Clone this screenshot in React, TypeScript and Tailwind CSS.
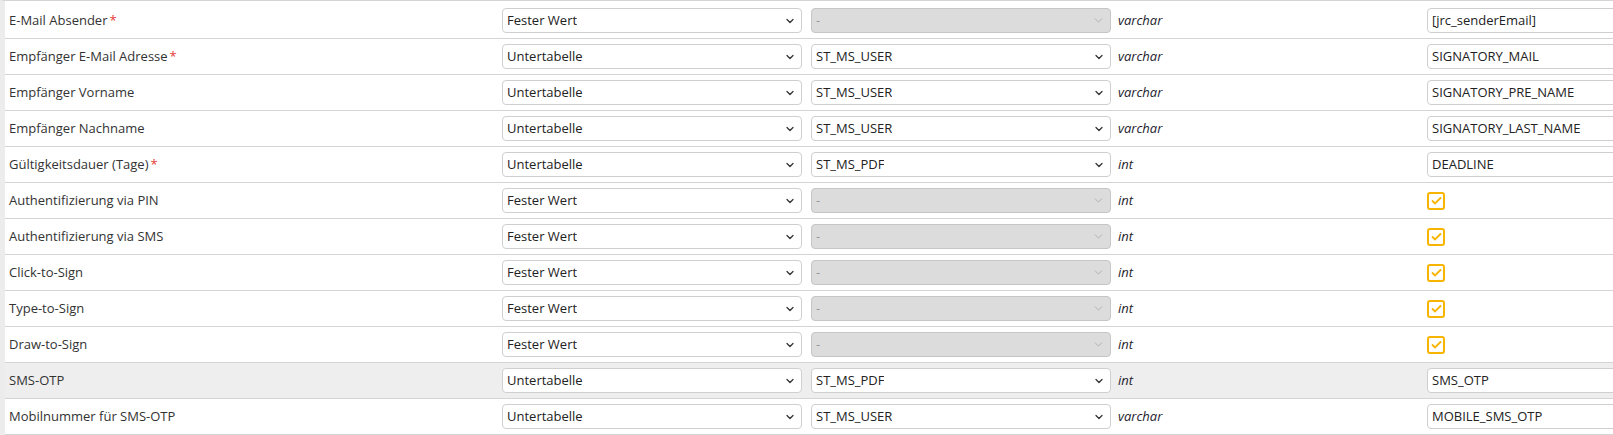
import React from 'react';
import { ChevronDown } from 'lucide-react';

type Row = {
  label: string;
  required?: boolean;
  source: string;
  table: string | null;
  type: string;
  value: string | null;
  highlight?: boolean;
};

const rows: Row[] = [
  { label: 'E-Mail Absender', required: true, source: 'Fester Wert', table: null, type: 'varchar', value: '[jrc_senderEmail]' },
  { label: 'Empfänger E-Mail Adresse', required: true, source: 'Untertabelle', table: 'ST_MS_USER', type: 'varchar', value: 'SIGNATORY_MAIL' },
  { label: 'Empfänger Vorname', source: 'Untertabelle', table: 'ST_MS_USER', type: 'varchar', value: 'SIGNATORY_PRE_NAME' },
  { label: 'Empfänger Nachname', source: 'Untertabelle', table: 'ST_MS_USER', type: 'varchar', value: 'SIGNATORY_LAST_NAME' },
  { label: 'Gültigkeitsdauer (Tage)', required: true, source: 'Untertabelle', table: 'ST_MS_PDF', type: 'int', value: 'DEADLINE' },
  { label: 'Authentifizierung via PIN', source: 'Fester Wert', table: null, type: 'int', value: null },
  { label: 'Authentifizierung via SMS', source: 'Fester Wert', table: null, type: 'int', value: null },
  { label: 'Click-to-Sign', source: 'Fester Wert', table: null, type: 'int', value: null },
  { label: 'Type-to-Sign', source: 'Fester Wert', table: null, type: 'int', value: null },
  { label: 'Draw-to-Sign', source: 'Fester Wert', table: null, type: 'int', value: null },
  { label: 'SMS-OTP', source: 'Untertabelle', table: 'ST_MS_PDF', type: 'int', value: 'SMS_OTP', highlight: true },
  { label: 'Mobilnummer für SMS-OTP', source: 'Untertabelle', table: 'ST_MS_USER', type: 'varchar', value: 'MOBILE_SMS_OTP' },
];

function FakeSelect({ text, disabled }: { text: string; disabled?: boolean }) {
  return (
    <div
      className={`flex items-center justify-between w-[300px] h-[25px] rounded border pl-1 pr-[5px] ${
        disabled ? 'bg-[#dcdcdc] border-[#c6c6c6] text-[#9a9a9a]' : 'bg-white border-[#cfcfcf] text-[#222]'
      }`}
    >
      <span className="truncate">{text}</span>
      <ChevronDown
        size={disabled ? 13 : 12}
        strokeWidth={disabled ? 1.5 : 2.5}
        className={disabled ? 'text-[#a8a8a8]' : 'text-[#333]'}
      />
    </div>
  );
}

function CheckBox() {
  return (
    <div className="w-[18px] h-[18px] rounded-[3px] border-2 border-[#f7b500] flex items-center justify-center">
      <svg width="11" height="9" viewBox="0 0 11 9" fill="none">
        <path d="M1 4.5 L4 7.5 L10 1.5" stroke="#f7b500" strokeWidth="1.8" />
      </svg>
    </div>
  );
}

export default function App() {
  return (
    <div
      className="w-[1613px] h-[435px] overflow-hidden bg-white text-[13px] text-[#333]"
      style={{ fontFamily: '"Open Sans", "Liberation Sans", sans-serif' }}
    >
      <div className="border-l-[5px] border-[#ececec] border-t border-t-[#d4d4d4] pt-[2px]">
        {rows.map((r) => (
          <div
            key={r.label}
            className={`flex items-center h-[36px] border-b border-[#d4d4d4] ${r.highlight ? 'bg-[#eeeeee]' : 'bg-white'}`}
          >
            <div className="w-[497px] shrink-0 pl-1 flex items-center">
              <span>{r.label}</span>
              {r.required && <span className="ml-[2px] text-[#e53935]">*</span>}
            </div>
            <div className="shrink-0">
              <FakeSelect text={r.source} />
            </div>
            <div className="shrink-0 ml-[9px]">
              <FakeSelect text={r.table ?? '-'} disabled={r.table === null} />
            </div>
            <div className="w-[316px] shrink-0 pl-[7px] italic text-[#1e1e2e]">{r.type}</div>
            <div className="shrink-0">
              {r.value !== null ? (
                <div className="w-[300px] h-[25px] rounded border border-[#cfcfcf] bg-white pl-1 flex items-center text-[#222]">
                  {r.value}
                </div>
              ) : (
                <CheckBox />
              )}
            </div>
          </div>
        ))}
      </div>
    </div>
  );
}
